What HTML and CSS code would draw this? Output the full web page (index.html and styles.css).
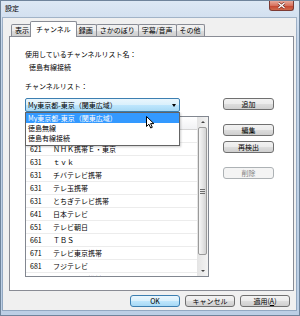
FILE: index.html
```html
<!DOCTYPE html>
<html lang="ja">

<head>
    <meta charset="UTF-8" />
    <title>設定</title>
    <link rel="stylesheet" href="styles.css">
</head>

<body>
    <div class="window">
        <div class="titlebar">
            <span class="title">設定</span>
            <span class="close">
                <svg width="9" height="7" viewBox="0 0 9 7">
                    <path d="M1.5 1 L7.5 6 M7.5 1 L1.5 6" stroke="#6b2a22" stroke-width="2.6" />
                    <path d="M1.5 1 L7.5 6 M7.5 1 L1.5 6" stroke="#fff" stroke-width="1.4" />
                </svg>
            </span>
        </div>

        <div class="client">
            <div class="tabs">
                <span class="tab">表示</span>
                <span class="tab active">チャンネル</span>
                <span class="tab">録画</span>
                <span class="tab">さかのぼり</span>
                <span class="tab">字幕/音声</span>
                <span class="tab">その他</span>
            </div>

            <div class="panel">
                <p>使用しているチャンネルリスト名：</p>
                <p class="value">徳島有線接続</p>
                <p class="list-label">チャンネルリスト：</p>

                <div class="main">
                    <div class="left">
                        <div class="combo">
                            <span>My東京都-東京（関東広域）</span>
                            <span class="arrow"></span>
                        </div>

                        <div class="listview">
                            <div class="rows">
                                <div class="row head"><span class="num"></span><span></span></div>
                                <div class="row"><span class="num"></span><span></span></div>
                                <div class="row"><span class="num">621</span><span>ＮＨＫ携帯Ｅ・東京</span></div>
                                <div class="row"><span class="num">631</span><span>ｔｖｋ</span></div>
                                <div class="row"><span class="num">631</span><span>チバテレビ携帯</span></div>
                                <div class="row"><span class="num">631</span><span>テレ玉携帯</span></div>
                                <div class="row"><span class="num">631</span><span>とちぎテレビ携帯</span></div>
                                <div class="row"><span class="num">641</span><span>日本テレビ</span></div>
                                <div class="row"><span class="num">651</span><span>テレビ朝日</span></div>
                                <div class="row"><span class="num">661</span><span>ＴＢＳ</span></div>
                                <div class="row"><span class="num">671</span><span>テレビ東京携帯</span></div>
                                <div class="row"><span class="num">681</span><span>フジテレビ</span></div>
                                <div class="row"><span class="num">691</span><span>ＭＸテレビ携帯</span></div>
                            </div>
                            <div class="scrollbar">
                                <span class="sb-btn"><span class="up"></span></span>
                                <span class="thumb"><span class="grip"></span></span>
                                <span class="track"></span>
                                <span class="sb-btn"><span class="down"></span></span>
                            </div>
                        </div>

                        <!-- open dropdown lies over the list -->
                        <ul class="dropdown">
                            <li class="selected">My東京都-東京（関東広域）</li>
                            <li>徳島無線</li>
                            <li>徳島有線接続</li>
                        </ul>
                        <svg class="cursor" width="9" height="13" viewBox="0 0 9 13">
                            <path d="M0.5 0.5 L0.5 10.5 L2.9 8.2 L4.7 12 L6.3 11.3 L4.6 7.6 L7.9 7.6 Z" fill="#fff"
                                stroke="#000" stroke-width="1" stroke-linejoin="round" />
                        </svg>
                    </div>

                    <div class="side">
                        <button>追加</button>
                        <button class="edit">編集</button>
                        <button class="rescan">再検出</button>
                        <button class="delete" disabled>削除</button>
                    </div>
                </div>
            </div>

            <div class="footer">
                <button class="default">OK</button>
                <button>キャンセル</button>
                <button>適用(<u>A</u>)</button>
            </div>
        </div>
    </div>
</body>

</html>
```

FILE: styles.css
```css
* {
    box-sizing: border-box;
}

body {
    margin: 0;
    font-family: "Noto Sans CJK JP", "Noto Sans", sans-serif;
    font-size: 7px;
    line-height: 10px;
    color: #000;
}

p {
    margin: 0;
}

.window {
    width: 300px;
    height: 316px;
    border: 1px solid #6f849b;
    background: linear-gradient(#dde8f4, #c4d5e9 40px, #bccfe5);
    padding: 0 3px 5px 2px;
    display: flex;
    flex-direction: column;
}

.titlebar {
    height: 17px;
    display: flex;
    justify-content: space-between;
    align-items: flex-start;
}

.title {
    padding: 2px 0 0 2px;
}

.close {
    width: 25px;
    height: 10px;
    margin-right: 2px;
    border: 1px solid #7c3a33;
    border-top: none;
    border-radius: 0 0 3px 3px;
    background: linear-gradient(#e8aa9c, #d7735f 50%, #c4432f 51%, #cf6a4c);
    display: flex;
    align-items: center;
    justify-content: center;
}

.client {
    flex: 1;
    background: #f0f0f0;
    box-shadow: 0 0 0 1px rgba(70, 95, 125, 0.35);
    padding: 3px 2px 3px 6px;
    display: flex;
    flex-direction: column;
}

.tabs {
    height: 15px;
    display: flex;
    align-items: flex-end;
    padding-left: 2px;
}

.tab {
    height: 12px;
    line-height: 11px;
    padding: 0 3px;
    margin-right: -1px;
    border: 1px solid #898c95;
    border-bottom: none;
    border-radius: 2px 2px 0 0;
    background: linear-gradient(#f2f2f2, #ebebeb 50%, #dddddd 51%, #cfcfcf);
}

.tab.active {
    position: relative;
    z-index: 1;
    height: 16px;
    line-height: 14px;
    margin: 0 -2px -1px -2px;
    padding: 0 5px;
    background: #fff;
}

.panel {
    height: 255px;
    border: 1px solid #898c95;
    background: #fff;
    padding: 12px 15px 0 15px;
}

.value {
    margin-top: 3px;
    padding-left: 4px;
}

.list-label {
    margin-top: 9px;
}

.main {
    display: flex;
    gap: 14px;
    margin-top: 7px;
}

.left {
    width: 184px;
    position: relative;
}

.combo {
    width: 155px;
    height: 14px;
    border: 1px solid #3c7fb1;
    border-radius: 2px;
    background: linear-gradient(#eaf6fd, #d9f0fc 50%, #bee6fd 51%, #a7d9f5);
    padding: 0 3px 0 2px;
    display: flex;
    align-items: center;
    justify-content: space-between;
}

.arrow {
    border-left: 2.5px solid transparent;
    border-right: 2.5px solid transparent;
    border-top: 3px solid #000;
}

.listview {
    margin-top: 4px;
    height: 161px;
    border: 1px solid #828790;
    background: #fff;
    display: flex;
    overflow: hidden;
}

.rows {
    flex: 1;
    overflow: hidden;
}

.row {
    height: 13px;
    line-height: 12px;
    border-bottom: 1px solid #ececec;
    display: flex;
}

.row .num {
    width: 27px;
    padding-left: 4px;
}

.row.head {
    background: linear-gradient(#fff, #f1f2f4);
    border-bottom: 1px solid #d5d5d5;
}

.scrollbar {
    width: 11px;
    display: flex;
    flex-direction: column;
    background: linear-gradient(to right, #e4e4e4, #f3f3f3);
}

.sb-btn {
    height: 10px;
    display: flex;
    align-items: center;
    justify-content: center;
}

.up,
.down {
    border-left: 2px solid transparent;
    border-right: 2px solid transparent;
}

.up {
    border-bottom: 2px solid #444;
}

.down {
    border-top: 2px solid #444;
}

.thumb {
    height: 128px;
    margin: 0 1px;
    border: 1px solid #9a9a9a;
    border-radius: 2px;
    background: linear-gradient(to right, #f6f6f6, #e6e6e6 50%, #d3d3d3);
    display: flex;
    align-items: center;
    justify-content: center;
}

.grip {
    width: 5px;
    height: 5px;
    border-top: 1px solid #6d6d6d;
    border-bottom: 1px solid #6d6d6d;
    background: linear-gradient(transparent 1px, #6d6d6d 1px, #6d6d6d 2px, transparent 2px);
}

.track {
    flex: 1;
}

.dropdown {
    position: absolute;
    top: 14px;
    left: 0;
    z-index: 2;
    width: 155px;
    margin: 0;
    padding: 0 0 2px;
    list-style: none;
    border: 1px solid #646464;
    background: #fff;
    box-shadow: 1px 1px 2px rgba(0, 0, 0, 0.2);
}

.dropdown li {
    height: 10px;
    line-height: 10px;
    padding-left: 2px;
}

.dropdown li.selected {
    background: #3399ff;
    color: #fff;
}

.cursor {
    position: absolute;
    left: 121px;
    top: 18px;
    z-index: 3;
}

.side {
    width: 51px;
    display: flex;
    flex-direction: column;
}

button {
    height: 12px;
    padding: 0;
    font: inherit;
    line-height: 10px;
    color: #000;
    border: 1px solid #707070;
    border-radius: 3px;
    background: linear-gradient(#f2f2f2, #ebebeb 50%, #dddddd 51%, #cfcfcf);
}

.side .edit {
    margin-top: 14px;
}

.side .rescan {
    margin-top: 5px;
}

.side .delete {
    margin-top: 14px;
    border-color: #adb2b5;
    background: #f4f4f4;
    color: #838383;
}

.footer {
    display: flex;
    justify-content: flex-end;
    gap: 5px;
    margin-top: 4px;
    padding-right: 4px;
}

.footer button {
    width: 50px;
}

.footer .default {
    border-color: #3c7fb1;
    background: linear-gradient(#eaf6fd, #d9f0fc 50%, #bee6fd 51%, #a7d9f5);
}
```
